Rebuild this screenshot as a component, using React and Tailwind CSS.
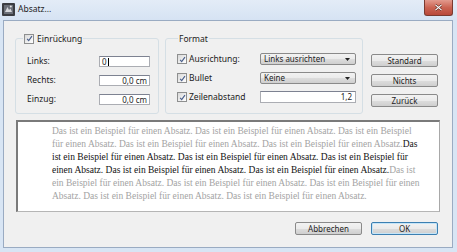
import React from 'react';

const ui = { fontFamily: '"Noto Sans", "Liberation Sans", sans-serif' };

const btnBg =
  'bg-[linear-gradient(#f2f2f2_0%,#ebebeb_50%,#dddddd_51%,#cfcfcf_100%)]';

const Check = () => (
  <span className="flex h-[10px] w-[10px] shrink-0 items-center justify-center border border-[#8e8f8f] bg-linear-to-br from-[#d9d9d9] to-white">
    <svg viewBox="0 0 8 8" className="h-[7px] w-[7px]">
      <path d="M1.3 4.3 L3.1 6.4 L6.8 1.3" fill="none" stroke="#4a5f8c" strokeWidth="1.3" />
    </svg>
  </span>
);

const Field = ({ value, caret }) => (
  <div
    className={`flex h-[11px] w-[51px] items-center border border-[#abadb3] border-t-[#7d8291] bg-white px-[2px] text-[8px] text-[#1e1e1e] ${
      caret ? 'justify-start' : 'justify-end'
    }`}
  >
    <span>{value}</span>
    {caret && <span className="ml-[1px] h-[8px] w-px bg-black" />}
  </div>
);

const Select = ({ label }) => (
  <div className={`flex h-[12px] w-[96px] items-center justify-between rounded-[2px] border border-[#8a8a8a] ${btnBg} pl-[3px] pr-[5px] text-[8px] text-[#1e1e1e]`}>
    <span>{label}</span>
    <svg viewBox="0 0 5 3" className="h-[3px] w-[5px]">
      <path d="M0 0 H5 L2.5 3 Z" fill="#222" />
    </svg>
  </div>
);

const Button = ({ children, primary }) => (
  <button
    className={`flex h-[13px] w-[67px] items-center justify-center rounded-[2px] border ${btnBg} text-[8px] text-[#1e1e1e] ${
      primary ? 'border-[#3c7fb1] shadow-[inset_0_0_0_1px_#c5e5f8]' : 'border-[#8a8a8a]'
    }`}
  >
    {children}
  </button>
);

const preview = [
  [['g', 'Das ist ein Beispiel für einen Absatz. Das ist ein Beispiel für einen Absatz. Das ist ein Beispiel']],
  [['g', 'für einen Absatz. Das ist ein Beispiel für einen Absatz. Das ist ein Beispiel für einen Absatz.'], ['b', 'Das']],
  [['b', 'ist ein Beispiel für einen Absatz. Das ist ein Beispiel für einen Absatz. Das ist ein Beispiel für']],
  [['b', 'einen Absatz. Das ist ein Beispiel für einen Absatz. Das ist ein Beispiel für einen Absatz.'], ['g', 'Das ist']],
  [['g', 'ein Beispiel für einen Absatz. Das ist ein Beispiel für einen Absatz. Das ist ein Beispiel für einen']],
  [['g', 'Absatz. Das ist ein Beispiel für einen Absatz. Das ist ein Beispiel für einen Absatz.']],
];

export default function App() {
  return (
    <div className="flex h-[252px] w-[457px] flex-col bg-[#d8e5f4]" style={ui}>
      {/* Title bar */}
      <div className="flex h-[20px] shrink-0 items-start justify-between bg-linear-to-b from-[#e3ecf7] to-[#d6e3f3]">
        <div className="mt-[3px] flex items-center pl-[2px]">
          <svg viewBox="0 0 13 13" className="h-[13px] w-[13px]">
            <rect x="0" y="0" width="13" height="13" rx="1" fill="#3b3d42" />
            <rect x="2" y="2" width="9" height="9" fill="#6b6f78" />
            <path d="M3 9 L5.5 4 L7 7 L8.5 5.5 L10 9 Z" fill="#d6d8dc" />
            <circle cx="8.8" cy="3.6" r="1" fill="#e8e8e8" />
          </svg>
          <span className="ml-[3px] text-[8.5px] leading-none text-[#1e1e1e]">Absatz...</span>
        </div>
        <div className="mr-[4px] flex h-[16px] w-[29px] items-center justify-center rounded-b-[3px] border border-t-0 border-[#7a3a30] bg-linear-to-b from-[#e29a8e] via-[#cb6453] to-[#b8483a]">
          <svg viewBox="0 0 10 8" className="h-[7px] w-[9px]">
            <path d="M1.5 1 L8.5 7 M8.5 1 L1.5 7" stroke="#5a2219" strokeWidth="2.6" />
            <path d="M1.5 1 L8.5 7 M8.5 1 L1.5 7" stroke="#ffffff" strokeWidth="1.5" />
          </svg>
        </div>
      </div>

      {/* Window body */}
      <div className="flex flex-1 pb-[4px] pl-[3px] pr-[4px]">
        <div className="flex flex-1 flex-col border border-[#9aabc2] bg-[#f0f0f0] text-[8.5px] text-[#222222]">
          {/* top row */}
          <div className="mt-[12px] flex pl-[11px]">
            <fieldset className="h-[81px] w-[144px] rounded-[3px] border border-[#d5dfe5] pl-[11px] pr-[8px]">
              <legend className="ml-[-4px] flex items-center gap-[3px] px-[1px]">
                <Check />
                <span className="leading-[11px]">Einrückung</span>
              </legend>
              <div className="mt-[12px] flex flex-col gap-[8px]">
                <div className="flex h-[11px] items-center justify-between">
                  <span>Links:</span>
                  <Field value="0" caret />
                </div>
                <div className="flex h-[11px] items-center justify-between">
                  <span>Rechts:</span>
                  <Field value="0,0 cm" />
                </div>
                <div className="flex h-[11px] items-center justify-between">
                  <span>Einzug:</span>
                  <Field value="0,0 cm" />
                </div>
              </div>
            </fieldset>

            <fieldset className="ml-[6px] h-[81px] w-[198px] rounded-[3px] border border-[#d5dfe5] pl-[11px]">
              <legend className="ml-[1px] px-[1px] leading-[11px]">Format</legend>
              <div className="mt-[9px] flex flex-col gap-[7px]">
                <div className="flex h-[12px] items-center">
                  <div className="flex w-[83px] items-center gap-[2px]">
                    <Check />
                    <span>Ausrichtung:</span>
                  </div>
                  <Select label="Links ausrichten" />
                </div>
                <div className="flex h-[12px] items-center">
                  <div className="flex w-[83px] items-center gap-[2px]">
                    <Check />
                    <span>Bullet</span>
                  </div>
                  <Select label="Keine" />
                </div>
                <div className="flex h-[12px] items-center">
                  <div className="flex w-[83px] items-center gap-[2px]">
                    <Check />
                    <span>Zeilenabstand</span>
                  </div>
                  <div className="flex h-[12px] w-[96px] items-center justify-end border border-[#abadb3] border-t-[#7d8291] bg-white pr-[3px] text-[8px]">
                    1,2
                  </div>
                </div>
              </div>
            </fieldset>

            <div className="ml-[8px] flex flex-col gap-[7px] pt-[21px]">
              <Button>Standard</Button>
              <Button>Nichts</Button>
              <Button>Zurück</Button>
            </div>
          </div>

          {/* preview */}
          <div
            className="ml-[12px] mt-[6px] h-[92px] w-[424px] border-b border-l-2 border-r border-t-2 border-b-[#b5b5b5] border-l-[#7a7a7a] border-r-[#a8a8a8] border-t-[#7a7a7a] bg-white pl-[34px] pt-[3px] text-[9.5px] leading-[13px]"
            style={{ fontFamily: '"Liberation Serif", "Times New Roman", serif' }}
          >
            {preview.map((line, i) => (
              <div key={i} className="whitespace-pre">
                {line.map(([tone, text], j) => (
                  <span key={j} className={tone === 'b' ? 'text-[#111111]' : 'text-[#a3a3a3]'}>
                    {text}
                  </span>
                ))}
              </div>
            ))}
          </div>

          {/* footer */}
          <div className="mt-[10px] flex justify-end gap-[9px] pr-[14px]">
            <Button>Abbrechen</Button>
            <Button primary>OK</Button>
          </div>
        </div>
      </div>
    </div>
  );
}
